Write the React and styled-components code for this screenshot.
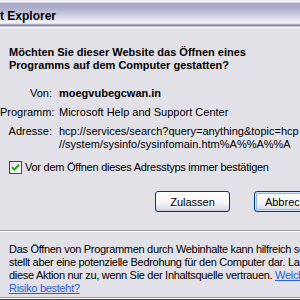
import React from "react";
import styled, { createGlobalStyle } from "styled-components";

const GlobalStyle = createGlobalStyle`
  html, body {
    margin: 0;
    padding: 0;
    width: 300px;
    height: 300px;
    overflow: hidden;
    background: #e2e1e7;
  }
  #root {
    width: 300px;
    height: 300px;
    overflow: hidden;
  }
`;

const Dialog = styled.div`
  width: 340px;
  height: 300px;
  display: flex;
  flex-direction: column;
  background: #e2e1e7;
  font-family: "Liberation Sans", Arial, sans-serif;
  font-size: 11px;
  color: #000;
  white-space: nowrap;
`;

const TitleBar = styled.div`
  height: 28px;
  box-sizing: border-box;
  padding-top: 3px;
  display: flex;
  align-items: center;
  background: linear-gradient(
    to bottom,
    #d8d8e4 0px,
    #ffffff 1px,
    #ffffff 2px,
    #a6a6c6 3px,
    #b2b2cf 9px,
    #d6d6e6 17px,
    #f6f6fb 23px,
    #c8c8dc 24px,
    #8a8aa8 25px,
    #8a8aa8 26px,
    #ffffff 27px
  );
`;

const Title = styled.span`
  margin-left: -40px;
  font-size: 12px;
  font-weight: bold;
  color: #000;
`;

const Body = styled.div`
  display: flex;
  flex-direction: column;
`;

const Heading = styled.div`
  margin: 18px 0 0 9px;
  font-weight: bold;
  line-height: 13px;
`;

const Info = styled.div`
  margin-top: 15px;
  display: grid;
  grid-template-columns: 52px auto;
  column-gap: 7px;
  row-gap: 6px;
  line-height: 13px;
`;

const Label = styled.div`
  text-align: right;
`;

const Value = styled.div`
  font-weight: ${(p) => (p.$bold ? "bold" : "normal")};
`;

const CheckRow = styled.label`
  margin: 10px 0 0 9px;
  display: flex;
  align-items: center;
  gap: 3px;
  height: 13px;
  line-height: 13px;
  letter-spacing: -0.25px;
`;

const Box = styled.span`
  width: 13px;
  height: 13px;
  box-sizing: border-box;
  border: 1px solid #1c5180;
  background: linear-gradient(135deg, #dcdcd7 0%, #ffffff 80%);
  display: flex;
  align-items: center;
  justify-content: center;
`;

const Buttons = styled.div`
  margin-top: 17px;
  display: flex;
  justify-content: flex-end;
  gap: 24px;
  padding-right: 11px;
`;

const Button = styled.button`
  width: 75px;
  height: 21px;
  box-sizing: border-box;
  padding: 0;
  font-family: "Liberation Sans", Arial, sans-serif;
  font-size: 11px;
  color: #000;
  border: 1px solid #003c74;
  border-radius: 3px;
  background: linear-gradient(to bottom, #ffffff 0%, #f4f4f6 60%, #d6d6e0 100%);
  box-shadow: ${(p) =>
    p.$default
      ? "inset 0 0 0 1px #cee7ff, inset 0 0 0 2px #98b8ea"
      : "inset 0 -1px 0 #c8c8d4"};
`;

const Separator = styled.div`
  margin-top: 18px;
  height: 1px;
  background: #9d9da1;
  border-bottom: 1px solid #ffffff;
`;

const Note = styled.div`
  padding: 11px 0 0 9px;
  line-height: 13px;
  letter-spacing: -0.3px;
`;

const Link = styled.a`
  color: #2b5fd9;
  text-decoration: underline;
`;

const BottomEdge = styled.div`
  margin-top: auto;
  height: 3px;
  background: linear-gradient(to bottom, #9d9da1 0 1px, #ffffff 1px 2px, #404060 2px 3px);
`;

export default function App() {
  return (
    <>
      <GlobalStyle />
      <Dialog>
        <TitleBar>
          <Title>Internet Explorer</Title>
        </TitleBar>
        <Body>
          <Heading>
            Möchten Sie dieser Website das Öffnen eines
            <br />
            Programms auf dem Computer gestatten?
          </Heading>
          <Info>
            <Label>Von:</Label>
            <Value $bold>moegvubegcwan.in</Value>
            <Label>Programm:</Label>
            <Value>Microsoft Help and Support Center</Value>
            <Label>Adresse:</Label>
            <Value>
              hcp://services/search?query=anything&amp;topic=hcp
              <br />
              //system/sysinfo/sysinfomain.htm%A%%A%%A
            </Value>
          </Info>
          <CheckRow>
            <Box>
              <svg width="9" height="9" viewBox="0 0 9 9">
                <path d="M1 4.2 L3.4 6.6 L8 1.8" fill="none" stroke="#21a121" strokeWidth="2" />
              </svg>
            </Box>
            Vor dem Öffnen dieses Adresstyps immer bestätigen
          </CheckRow>
          <Buttons>
            <Button>Zulassen</Button>
            <Button $default>Abbrechen</Button>
          </Buttons>
          <Separator />
          <Note>
            Das Öffnen von Programmen durch Webinhalte kann hilfreich sein,
            <br />
            stellt aber eine potenzielle Bedrohung für den Computer dar. Lassen Sie
            <br />
            diese Aktion nur zu, wenn Sie der Inhaltsquelle vertrauen. <Link href="#">Welches</Link>
            <br />
            <Link href="#">Risiko besteht?</Link>
          </Note>
        </Body>
        <BottomEdge />
      </Dialog>
    </>
  );
}
